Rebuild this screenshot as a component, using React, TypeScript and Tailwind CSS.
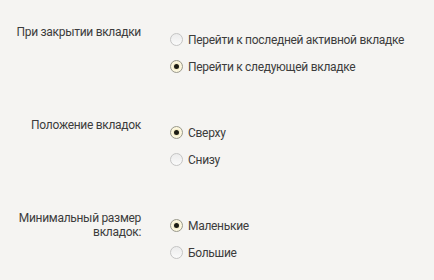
const groups = [
  {
    label: ["При закрытии вкладки"],
    options: ["Перейти к последней активной вкладке", "Перейти к следующей вкладке"],
    selected: 1,
  },
  {
    label: ["Положение вкладок"],
    options: ["Сверху", "Снизу"],
    selected: 0,
  },
  {
    label: ["Минимальный размер", "вкладок:"],
    options: ["Маленькие", "Большие"],
    selected: 0,
  },
];

function Radio({ checked }: { checked: boolean }) {
  return checked ? (
    <span className="flex h-[13px] w-[13px] shrink-0 items-center justify-center rounded-full border border-[#9a9a90] bg-[#f3ebc4] shadow-[inset_0_0_0_2px_#fbf6df]">
      <span className="h-[5px] w-[5px] rounded-full bg-[#1c1c14]" />
    </span>
  ) : (
    <span className="h-[13px] w-[13px] shrink-0 rounded-full border border-[#c4c4c4] bg-gradient-to-b from-[#ececec] to-[#fafafa]" />
  );
}

export default function App() {
  return (
    <div
      className="h-[280px] w-[434px] bg-[#f5f4f2] pt-[25px] text-[#3c3c3c] tracking-[-0.3px]"
      style={{ fontFamily: 'Roboto, "Noto Sans", sans-serif' }}
    >
      <div className="flex flex-col gap-[38px]">
        {groups.map((g, gi) => (
          <div key={gi} className="flex">
            <div className="w-[141px] shrink-0 text-right text-[12px] leading-[14px]">
              {g.label.map((l) => (
                <div key={l}>{l}</div>
              ))}
            </div>
            <div className="ml-[29px] mt-[1px] flex flex-col">
              {g.options.map((o, oi) => (
                <div key={o} className="flex h-[27px] items-center gap-[5px] text-[12px]">
                  <Radio checked={oi === g.selected} />
                  <span>{o}</span>
                </div>
              ))}
            </div>
          </div>
        ))}
      </div>
    </div>
  );
}
